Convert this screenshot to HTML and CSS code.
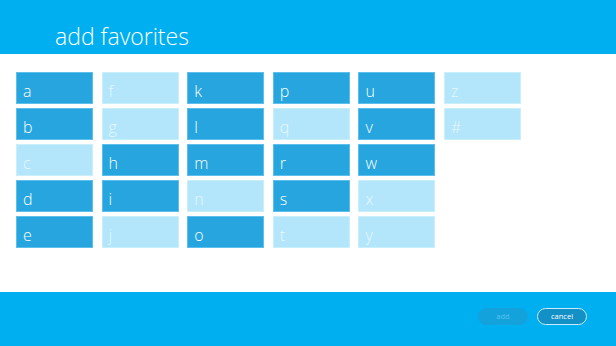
FILE: index.html
```html
<!DOCTYPE html>
<html>
<head>
<meta charset="utf-8">
<link rel="stylesheet" href="styles.css">
</head>
<body>
<div class="app">
  <header class="header"><h1 class="title">add favorites</h1></header>
  <main class="main">
    <div class="grid">
      <div class="tile dark"><span>a</span></div>
      <div class="tile dark"><span>b</span></div>
      <div class="tile light"><span>c</span></div>
      <div class="tile dark"><span>d</span></div>
      <div class="tile dark"><span>e</span></div>
      <div class="tile light"><span>f</span></div>
      <div class="tile light"><span>g</span></div>
      <div class="tile dark"><span>h</span></div>
      <div class="tile dark"><span>i</span></div>
      <div class="tile light"><span>j</span></div>
      <div class="tile dark"><span>k</span></div>
      <div class="tile dark"><span>l</span></div>
      <div class="tile dark"><span>m</span></div>
      <div class="tile light"><span>n</span></div>
      <div class="tile dark"><span>o</span></div>
      <div class="tile dark"><span>p</span></div>
      <div class="tile light"><span>q</span></div>
      <div class="tile dark"><span>r</span></div>
      <div class="tile dark"><span>s</span></div>
      <div class="tile light"><span>t</span></div>
      <div class="tile dark"><span>u</span></div>
      <div class="tile dark"><span>v</span></div>
      <div class="tile dark"><span>w</span></div>
      <div class="tile light"><span>x</span></div>
      <div class="tile light"><span>y</span></div>
      <div class="tile light"><span>z</span></div>
      <div class="tile light"><span>#</span></div>
    </div>
  </main>
  <footer class="footer">
    <button class="btn btn-add">add</button>
    <button class="btn btn-cancel">cancel</button>
  </footer>
</div>
</body>
</html>
```
FILE: styles.css
```css
html, body {
  margin: 0;
  padding: 0;
}
body {
  font-family: "Open Sans", "Noto Sans", sans-serif;
  background: #ffffff;
}
.app {
  width: 616px;
  height: 346px;
  display: flex;
  flex-direction: column;
}
.header {
  height: 54px;
  background: #00aff0;
  flex: none;
}
.title {
  margin: 0;
  padding: 20px 0 0 55px;
  font-size: 23px;
  font-weight: 300;
  line-height: 32px;
  color: #ffffff;
}
.main {
  flex: 1;
  padding: 18px 0 0 16px;
}
.grid {
  display: grid;
  grid-auto-flow: column;
  grid-template-rows: repeat(5, 32px);
  grid-auto-columns: 77px;
  column-gap: 8.6px;
  row-gap: 4px;
}
.tile {
  box-sizing: border-box;
  display: flex;
  align-items: flex-end;
  padding: 0 0 2px 6px;
  font-size: 16px;
  font-weight: 300;
  line-height: 20px;
}
.tile.dark {
  background: #26a5de;
  border: 1px solid #5dc0ec;
  color: #ffffff;
}
.tile.light {
  background: #b3e6fa;
  border: 1px solid #c9eefc;
  color: #e6f7fe;
}
.footer {
  height: 54px;
  flex: none;
  background: #00aff0;
  display: flex;
  justify-content: flex-end;
  align-items: flex-start;
  padding: 16px 29px 0 0;
  box-sizing: border-box;
  gap: 9px;
}
.btn {
  width: 50px;
  height: 17px;
  border-radius: 9px;
  font-family: "Open Sans", "Noto Sans", sans-serif;
  font-size: 7.5px;
  padding: 0;
  line-height: 15px;
  box-sizing: border-box;
}
.btn-add {
  background: #14a2dc;
  border: 1px solid #14a2dc;
  color: #57c4ee;
}
.btn-cancel {
  background: #1390c6;
  border: 1px solid #c8ecfa;
  color: #ffffff;
}
```
